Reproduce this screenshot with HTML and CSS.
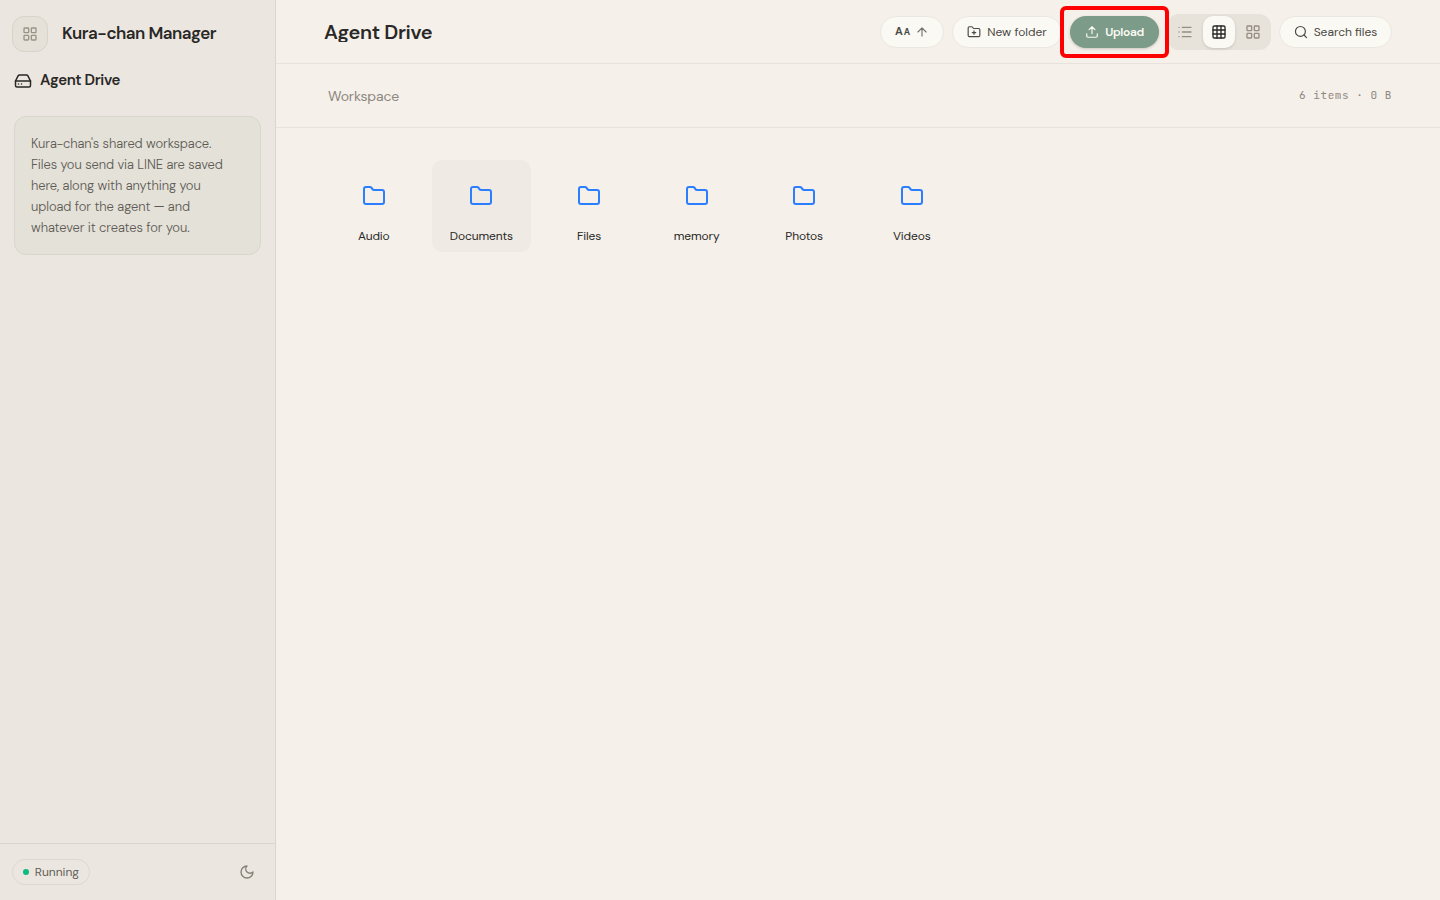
FILE: index.html
```
<!DOCTYPE html>
<html lang="en">
<head>
    <meta charset="UTF-8">
    <meta name="viewport" content="width=device-width, initial-scale=1.0">
    <title>Agent Drive - Kura-chan Manager</title>
    <link rel="stylesheet" href="styles.css">
</head>
<body>
    <!-- shared icon shapes -->
    <svg class="sprite" aria-hidden="true">
        <symbol id="icon-folder" viewBox="0 0 24 24">
            <path d="M20 20a2 2 0 0 0 2-2V8a2 2 0 0 0-2-2h-7.9a2 2 0 0 1-1.69-.9L9.6 3.9A2 2 0 0 0 7.93 3H4a2 2 0 0 0-2 2v13a2 2 0 0 0 2 2Z"/>
        </symbol>
        <symbol id="icon-grid" viewBox="0 0 24 24">
            <rect x="3" y="3" width="7" height="7" rx="1"/>
            <rect x="14" y="3" width="7" height="7" rx="1"/>
            <rect x="14" y="14" width="7" height="7" rx="1"/>
            <rect x="3" y="14" width="7" height="7" rx="1"/>
        </symbol>
    </svg>

    <div class="app">
        <aside class="sidebar">
            <div class="brand">
                <button class="brand-button" aria-label="Apps">
                    <svg class="icon icon-16"><use href="#icon-grid"/></svg>
                </button>
                <span class="brand-name">Kura-chan Manager</span>
            </div>

            <div class="nav-title">
                <svg class="icon icon-18" viewBox="0 0 24 24">
                    <path d="M22 12H2"/>
                    <path d="M5.45 5.11 2 12v6a2 2 0 0 0 2 2h16a2 2 0 0 0 2-2v-6l-3.45-6.89A2 2 0 0 0 16.76 4H7.24a2 2 0 0 0-1.79 1.11z"/>
                    <path d="M6 16h.01M10 16h.01"/>
                </svg>
                <span>Agent Drive</span>
            </div>

            <p class="note">
                Kura-chan's shared workspace.<br>
                Files you send via LINE are saved<br>
                here, along with anything you<br>
                upload for the agent — and<br>
                whatever it creates for you.
            </p>

            <div class="sidebar-footer">
                <span class="status"><span class="status-dot"></span><span>Running</span></span>
                <button class="theme-button" aria-label="Toggle theme">
                    <svg class="icon icon-16" viewBox="0 0 24 24"><path d="M12 3a6 6 0 0 0 9 9 9 9 0 1 1-9-9Z"/></svg>
                </button>
            </div>
        </aside>

        <main class="main">
            <header class="topbar">
                <h1>Agent Drive</h1>
                <div class="toolbar">
                    <button class="pill sort" aria-label="Sort by name">
                        <span class="sort-label">A<small>A</small></span>
                        <svg class="icon icon-14 icon-arrow" viewBox="0 0 24 24"><path d="m5 12 7-7 7 7M12 19V5"/></svg>
                    </button>
                    <button class="pill new-folder">
                        <svg class="icon icon-14" viewBox="0 0 24 24">
                            <path d="M12 10v6M9 13h6"/>
                            <path d="M20 20a2 2 0 0 0 2-2V8a2 2 0 0 0-2-2h-7.9a2 2 0 0 1-1.69-.9L9.6 3.9A2 2 0 0 0 7.93 3H4a2 2 0 0 0-2 2v13a2 2 0 0 0 2 2Z"/>
                        </svg>
                        <span>New folder</span>
                    </button>
                    <div class="upload-wrap">
                        <button class="pill upload">
                            <svg class="icon icon-14" viewBox="0 0 24 24">
                                <path d="M21 15v4a2 2 0 0 1-2 2H5a2 2 0 0 1-2-2v-4M17 8l-5-5-5 5M12 3v12"/>
                            </svg>
                            <span>Upload</span>
                        </button>
                        <div class="highlight"></div>
                    </div>
                    <div class="view-switch">
                        <button aria-label="List">
                            <svg class="icon icon-16" viewBox="0 0 24 24"><path d="M8 5h13M8 12h13M8 19h13M3 5h.01M3 12h.01M3 19h.01"/></svg>
                        </button>
                        <button class="active" aria-label="Small grid">
                            <svg class="icon icon-16" viewBox="0 0 24 24">
                                <rect x="3" y="3" width="18" height="18" rx="2"/>
                                <path d="M3 9h18M3 15h18M9 3v18M15 3v18"/>
                            </svg>
                        </button>
                        <button aria-label="Large grid">
                            <svg class="icon icon-16"><use href="#icon-grid"/></svg>
                        </button>
                    </div>
                    <button class="pill search">
                        <svg class="icon icon-14" viewBox="0 0 24 24"><circle cx="11" cy="11" r="8.5"/><path d="m21.5 21.5-4.4-4.4"/></svg>
                        <span>Search files</span>
                    </button>
                </div>
            </header>

            <div class="pathbar">
                <span class="crumb">Workspace</span>
                <span class="summary">6 items · 0 B</span>
            </div>

            <div class="files">
                <div class="file"><svg class="icon folder"><use href="#icon-folder"/></svg><span>Audio</span></div>
                <div class="file hovered"><svg class="icon folder"><use href="#icon-folder"/></svg><span>Documents</span></div>
                <div class="file"><svg class="icon folder"><use href="#icon-folder"/></svg><span>Files</span></div>
                <div class="file"><svg class="icon folder"><use href="#icon-folder"/></svg><span>memory</span></div>
                <div class="file"><svg class="icon folder"><use href="#icon-folder"/></svg><span>Photos</span></div>
                <div class="file"><svg class="icon folder"><use href="#icon-folder"/></svg><span>Videos</span></div>
            </div>
        </main>
    </div>
</body>
</html>
```
FILE: styles.css
```
* { box-sizing: border-box; }
body {
    margin: 0;
    font-family: "DM Sans", Inter, sans-serif;
    background: #f5f0ea;
    color: #292826;
}
button {
    border: none;
    background: none;
    padding: 0;
    margin: 0;
    font: inherit;
    color: inherit;
    display: flex;
    align-items: center;
    justify-content: center;
}
.sprite { display: none; }
.icon {
    display: block;
    flex: none;
    fill: none;
    stroke: currentColor;
    stroke-width: 2;
    stroke-linecap: round;
    stroke-linejoin: round;
}
.icon-14 { width: 14px; height: 14px; }
.icon-16 { width: 16px; height: 16px; }
.icon-18 { width: 18px; height: 18px; }

.app {
    display: flex;
    height: 100vh;
}

/* sidebar */
.sidebar {
    width: 276px;
    flex: none;
    display: flex;
    flex-direction: column;
    background: #ebe6df;
    border-right: 1px solid #dad5ce;
}
.brand {
    display: flex;
    align-items: center;
    gap: 14px;
    padding: 16px 12px 0;
}
.brand-button {
    width: 36px;
    height: 36px;
    border: 1px solid #d7d4ca;
    border-radius: 12px;
    background: #e5e1d9;
    color: #9b9486;
}
.brand-name {
    font-size: 17px;
    font-weight: 600;
    line-height: 20px;
    letter-spacing: -0.03em;
    margin-top: -2px;
}
.nav-title {
    display: flex;
    align-items: center;
    gap: 8px;
    height: 24px;
    margin: 16px 14px 0;
    font-size: 15px;
    font-weight: 600;
    letter-spacing: -0.025em;
}
.nav-title .icon { margin-top: 2px; }
.note {
    margin: 24px 14px 0;
    padding: 16px;
    height: 139px;
    border: 1px solid #d6d8cb;
    border-radius: 12px;
    background: #e3e1d8;
    color: #5e5a54;
    font-size: 13px;
    font-weight: 300;
    line-height: 21px;
    letter-spacing: -0.08px;
    white-space: nowrap;
}
.sidebar-footer {
    margin-top: auto;
    height: 57px;
    padding: 0 20px 0 12px;
    display: flex;
    align-items: center;
    justify-content: space-between;
    border-top: 1px solid #dad5ce;
}
.status {
    display: flex;
    align-items: center;
    gap: 6px;
    width: 78px;
    height: 26px;
    padding: 0 10px;
    border: 1px solid #ddd8d0;
    border-radius: 13px;
    color: #625e58;
    font-size: 12px;
}
.status-dot {
    width: 6px;
    height: 6px;
    border-radius: 50%;
    background: #10b981;
}
.theme-button { color: #857f74; }

/* top bar */
.main {
    flex: 1;
    min-width: 0;
}
.topbar {
    height: 64px;
    padding: 0 48px;
    display: flex;
    align-items: center;
    justify-content: space-between;
    border-bottom: 1px solid #e7e2dc;
}
h1 {
    margin: 1px 0 0;
    font-size: 20px;
    font-weight: 600;
    line-height: 20px;
    letter-spacing: -0.018em;
    overflow: hidden;
}
.toolbar {
    display: flex;
    align-items: center;
    gap: 8px;
}
.pill {
    height: 32px;
    border-radius: 16px;
    border: 1px solid #ebe7e0;
    background: #faf9f4;
    color: #4c4944;
    font-size: 12px;
    white-space: nowrap;
    gap: 6px;
}
.sort { width: 64px; gap: 5px; }
.sort-label {
    font-size: 11px;
    font-weight: 700;
    line-height: 14px;
}
.sort-label small {
    font-size: 9px;
    margin-left: 1px;
}
.icon-arrow { color: #77736c; }
.new-folder { width: 110px; }
.upload-wrap { position: relative; }
.upload {
    width: 89px;
    border: none;
    background: #7c9b88;
    color: #fbfaf5;
    font-weight: 600;
    letter-spacing: -0.03em;
    box-shadow: 0 1px 3px rgba(0,0,0,0.18);
}
.highlight {
    position: absolute;
    top: -10px;
    left: -10px;
    width: 109px;
    height: 52px;
    border: 4px solid #ff0000;
    border-radius: 6px;
    pointer-events: none;
    z-index: 1;
}
.view-switch {
    display: flex;
    gap: 2px;
    padding: 2px;
    border-radius: 12px;
    background: #e7e3db;
}
.view-switch button {
    width: 32px;
    height: 32px;
    border-radius: 10px;
    color: #958d84;
}
.view-switch .active {
    background: #faf9f4;
    color: #292826;
    box-shadow: 0 1px 3px rgba(0,0,0,0.14);
}
.search { width: 113px; }

/* breadcrumb row */
.pathbar {
    height: 64px;
    padding: 0 48px 0 52px;
    display: flex;
    align-items: center;
    justify-content: space-between;
    border-bottom: 1px solid #e7e2dc;
    color: #8d8780;
}
.crumb {
    font-size: 14px;
    letter-spacing: -0.01em;
    padding-top: 1px;
}
.summary {
    font-family: "JetBrains Mono", "Liberation Mono", monospace;
    font-size: 11px;
    letter-spacing: 0.55px;
    padding-bottom: 2px;
}

/* folders */
.files {
    display: grid;
    grid-template-columns: repeat(10, 1fr);
    gap: 8px;
    padding: 32px 48px;
}
.file {
    height: 92px;
    padding-top: 24px;
    border-radius: 10px;
    display: flex;
    flex-direction: column;
    align-items: center;
    gap: 20px;
    font-size: 12px;
    line-height: 16px;
    letter-spacing: -0.01em;
}
.hovered { background: #efeae4; }
.folder {
    width: 26px;
    height: 24px;
    color: #2b7fff;
}
```
